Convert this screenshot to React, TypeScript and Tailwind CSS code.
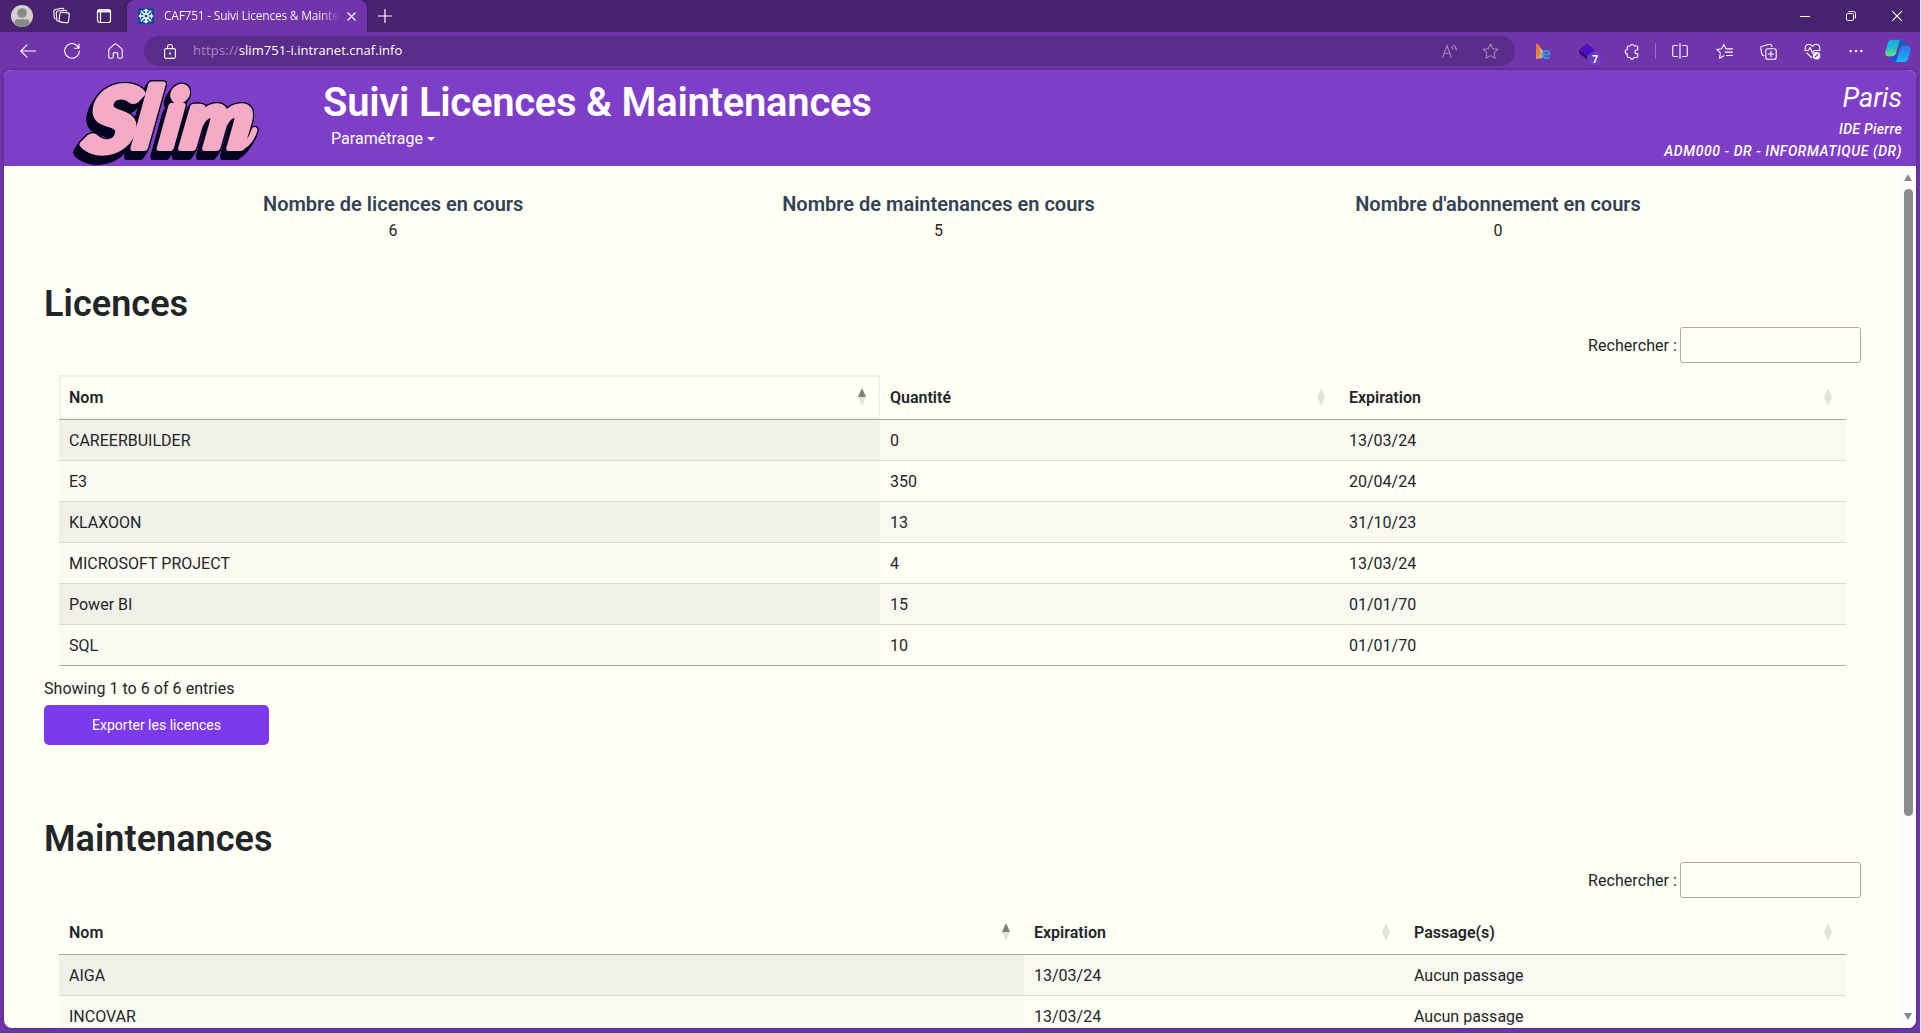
import type { ReactNode } from "react";

function Icon({ size = 16, children, className = "" }: { size?: number; children: ReactNode; className?: string }) {
  return (
    <svg
      width={size}
      height={size}
      viewBox="0 0 16 16"
      fill="none"
      stroke="currentColor"
      strokeWidth="1"
      strokeLinecap="round"
      strokeLinejoin="round"
      className={"shrink-0 " + className}
    >
      {children}
    </svg>
  );
}

function Slot({ children }: { children: ReactNode }) {
  return <div className="relative flex h-full w-11 shrink-0 items-center justify-center">{children}</div>;
}

function TabStrip() {
  return (
    <div className="flex h-8 items-stretch bg-[#47226e] text-white">
      <div className="flex w-[127px] items-center">
        <svg width="22" height="22" viewBox="0 0 22 22" className="ml-[11px]">
          <circle cx="11" cy="11" r="11" fill="#d2d0ce" />
          <circle cx="11" cy="8" r="4.8" fill="#8a8886" />
          <path d="M3.5 18.5v-1.2c0-1.8 1.2-3 3-3h9c1.800 0 3 1.200 3 3v1.200A11 11 0 0 1 11 22a11 11 0 0 1-7.500-3.500z" fill="#8a8886" />
        </svg>
        <svg width="18" height="18" viewBox="0 0 18 18" fill="none" stroke="white" strokeWidth="1.100" strokeLinejoin="round" className="ml-5">
          <rect x="6.500" y="5.500" width="9.500" height="10" rx="2" transform="rotate(7 11 10)" />
          <path d="M5.500 14.500c-1 0-1.600-.6-1.700-1.600L3.300 6c0-1.200.6-1.900 1.700-2l7-.8c1 0 1.700.4 2 1.300" />
          <path d="M2.700 12C1.800 11.800 1.300 11.200 1.200 10.200L.8 4.500c0-1.100.6-1.800 1.600-2l6.500-1.200c.9-.1 1.600.2 2 1" />
        </svg>
        <svg width="16" height="16" viewBox="0 0 16 16" fill="none" stroke="white" strokeWidth="1.200" className="ml-[25px]">
          <rect x="1.500" y="1.500" width="13" height="13" rx="2.200" />
          <path d="M1.500 3.300h13" strokeWidth="2.200" />
          <path d="M4.500 4v10" />
        </svg>
      </div>
      <div className="flex w-60 items-center rounded-t-lg bg-[#7034ab] pl-[11px] shadow-[0_0_3px_rgba(0,0,0,0.4)]">
        <svg width="16" height="16" viewBox="0 0 16 16" className="shrink-0">
          <rect width="16" height="16" fill="#0b4a9b" />
          <g stroke="white" strokeWidth="1.700" strokeLinecap="round">
            <path d="M8 1.500v13M1.500 8h13M3.400 3.400l9.200 9.200M12.600 3.400l-9.200 9.200" />
            <path d="M6 2.500h4M6 13.500h4M2.500 6v4M13.500 6v4" strokeWidth="1.300" />
          </g>
          <circle cx="8" cy="8" r="1.500" fill="#0b4a9b" />
        </svg>
        <span className="ml-[10px] w-[177px] whitespace-nowrap bg-gradient-to-r from-white from-88% to-transparent to-99% bg-clip-text font-['Open_Sans','Noto_Sans',sans-serif] text-[12px] tracking-[-0.24px] text-transparent">
          CAF751 - Suivi Licences &amp; Mainte
        </span>
        <svg width="9" height="9" viewBox="0 0 9 9" stroke="white" strokeWidth="1.100" className="ml-[6px] shrink-0">
          <path d="M.5.5l8 8M8.500.5l-8 8" />
        </svg>
      </div>
      <div className="flex flex-1 items-center">
        <svg width="14" height="14" viewBox="0 0 14 14" stroke="white" strokeWidth="1.200" className="ml-[11px]">
          <path d="M7 0v14M0 7h14" />
        </svg>
      </div>
      <div className="flex items-center">
        <svg width="10" height="10" viewBox="0 0 10 10" stroke="white" className="mr-9">
          <path d="M0 5.500h10" />
        </svg>
        <svg width="10" height="10" viewBox="0 0 10 10" fill="none" stroke="white" className="mr-9">
          <rect x=".5" y="2.500" width="7" height="7" rx="1.200" />
          <path d="M2.500.5h5a2 2 0 0 1 2 2v5" />
        </svg>
        <svg width="10" height="10" viewBox="0 0 10 10" stroke="white" strokeWidth="1.100" className="mr-[18px]">
          <path d="M0 0l10 10M10 0L0 10" />
        </svg>
      </div>
    </div>
  );
}

function Toolbar() {
  return (
    <div className="flex h-[38px] items-center bg-[#7034ab] text-white">
      <svg width="16" height="14" viewBox="0 0 16 14" fill="none" stroke="white" strokeWidth="1.100" strokeLinecap="round" strokeLinejoin="round" className="ml-5">
        <path d="M7 .8L.8 7 7 13.200M.8 7h14.700" />
      </svg>
      <svg width="16" height="16" viewBox="0 0 16 16" fill="none" stroke="white" strokeWidth="1.100" strokeLinecap="round" className="ml-7">
        <path d="M14.800 5.200A7.300 7.300 0 1 0 15.300 8M15 1v4.300h-4.300" />
      </svg>
      <svg width="15" height="16" viewBox="0 0 15 16" fill="none" stroke="white" strokeWidth="1.100" strokeLinejoin="round" className="ml-[28px]">
        <path d="M.8 6.900c0-.5.200-.9.600-1.200L6.600 1.200c.5-.5 1.300-.5 1.800 0l5.200 4.500c.4.300.6.700.6 1.200v7.200c0 .6-.5 1.100-1.100 1.100h-2.200c-.6 0-1.100-.5-1.100-1.100v-3.400c0-.6-.5-1.100-1.100-1.100H6.300c-.6 0-1.100.5-1.100 1.100v3.400c0 .6-.5 1.100-1.100 1.100H1.900c-.6 0-1.100-.5-1.100-1.100z" />
      </svg>
      <div className="ml-[21px] flex h-[30px] w-[1371px] items-center rounded-full bg-[#592c8a]">
        <svg width="12" height="15" viewBox="0 0 12 15" fill="none" stroke="white" strokeWidth="1.100" className="ml-5">
          <rect x=".6" y="4.600" width="10.800" height="9.800" rx="1.600" />
          <path d="M3.500 4.500V3a2.500 2.500 0 0 1 5 0v1.500" />
          <circle cx="6" cy="9.500" r="1" fill="white" stroke="none" />
        </svg>
        <span className="ml-[17px] flex-1 whitespace-nowrap font-['Open_Sans','Noto_Sans',sans-serif] text-[13px] tracking-[0.04px]">
          <span className="tracking-[0.18px] text-[#a48cc0]">https://</span>slim751-i.intranet.cnaf.info
        </span>
        <svg width="16" height="14" viewBox="0 0 16 14" fill="none" stroke="#a08bb5" strokeWidth="1.100" strokeLinecap="round" className="mr-6">
          <path d="M.8 13L5 1.500l4.200 11.500M2.200 9.300h5.600M9.500 2.500c1 .8 1.400 1.700 1.400 3M11.300.8c2 1.300 3 3 3 5.500" />
        </svg>
        <Icon size={17} className="mr-[16px] text-[#a08bb5]">
          <path d="M8 .9l2.100 4.500 4.900.6-3.600 3.400.9 4.900L8 11.900l-4.300 2.400.9-4.900L1 6l4.900-.6z" />
        </Icon>
      </div>
      <div className="ml-[6px] flex h-full items-center">
        <Slot>
          <svg width="16" height="16" viewBox="0 0 16 16">
            <path d="M1 0l4 3v3l3 2v3l-3 4-4 1z" fill="#f07820" />
            <path d="M4 4l4 3v8l-7 1 4-5z" fill="#b9a7a8" />
            <path d="M1 10l4 2-4 4z" fill="#f28a2e" />
            <path d="M8.500 11.500h6c0-2.200-1-3.700-3-3.700s-3.200 1.500-3.200 3.700 1.300 3.700 3.400 3.700c1.200 0 2-.3 2.700-1" fill="none" stroke="#3f8fd8" strokeWidth="1.900" />
          </svg>
        </Slot>
        <Slot>
          <svg width="18" height="18" viewBox="0 0 18 18">
            <path d="M9 1.500l8 6.500-8 6-8-6z" fill="#4b0fc0" />
            <path d="M1 8l8 6v3.500L1 11z" fill="#2c0a72" />
          </svg>
          <span className="absolute left-[24px] top-[21px] flex h-3 w-[12px] items-center justify-center rounded-sm bg-[#6a3bc4] font-['Open_Sans',sans-serif] text-[10px] font-bold">7</span>
        </Slot>
        <Slot>
          <Icon size={17}>
            <path d="M5.500 2.800h1.200a1.900 1.900 0 0 1 3.700 0h2.300c.7 0 1.200.5 1.200 1.200v2.300h-.7a1.900 1.900 0 0 0 0 3.800h.7v2.400c0 .7-.5 1.200-1.200 1.200h-2.400a1.900 1.900 0 0 1-3.700 0H5.200c-.7 0-1.200-.5-1.200-1.200v-2.300a1.900 1.900 0 0 1 0-3.800V4c0-.7.500-1.200 1.200-1.200z" />
          </Icon>
        </Slot>
        <div className="mx-0.5 h-4 w-px bg-[#9a70c6]" />
        <Slot>
          <svg width="16" height="16" viewBox="0 0 16 16" fill="none" stroke="white" strokeWidth="1.100" strokeLinecap="round">
            <path d="M5.500 2.500H2.300C1.400 2.500.7 3.200.7 4.100v7.800c0 .9.700 1.600 1.600 1.600h3.200M10.500 2.500h3.200c.9 0 1.600.7 1.600 1.600v7.800c0 .9-.7 1.600-1.600 1.600h-3.200M8 .5v15" />
          </svg>
        </Slot>
        <Slot>
          <Icon size={17}>
            <path d="M9.300 5.500L7.400 1.300 5.300 5.500.7 6.100l3.400 3.300-.8 4.900 4.100-2.300M10 5.500h5.500M8.700 8.600h6.800M9.800 11.700h5.700" />
          </Icon>
        </Slot>
        <Slot>
          <svg width="17" height="17" viewBox="0 0 17 17" fill="none" stroke="white" strokeWidth="1.100" strokeLinecap="round" strokeLinejoin="round">
            <rect x="5.800" y="5.800" width="10.400" height="10.400" rx="2" />
            <path d="M11 8.300v5.400M8.300 11h5.400M3.800 12.600c-1 .1-1.700-.4-1.900-1.400L.8 5.300c-.2-1 .4-1.800 1.300-2l7.400-2c1-.3 1.800.2 2.100 1.100l.3 1.200" />
          </svg>
        </Slot>
        <Slot>
          <svg width="17" height="17" viewBox="0 0 17 17" fill="none" stroke="white" strokeWidth="1.100" strokeLinecap="round" strokeLinejoin="round">
            <path d="M1.300 6.500C.6 4.300 1.900 1.300 4.700 1.300c1.700 0 2.800.9 3.800 2.200 1-1.300 2.100-2.200 3.800-2.200 2.800 0 4.100 3 3.400 5.200M.6 7.500h3.700l1.800-3 2.400 5.500 1.600-2.500h5.800M3 10l4.500 4.500" />
            <circle cx="12.500" cy="12.700" r="3.800" fill="white" stroke="none" />
            <path d="M11 13.900l2.800-2.500" stroke="#7034ab" strokeWidth="1.300" />
          </svg>
        </Slot>
        <Slot>
          <svg width="14" height="4" viewBox="0 0 14 4" fill="white">
            <circle cx="1.700" cy="2" r="1.200" />
            <circle cx="7" cy="2" r="1.200" />
            <circle cx="12.300" cy="2" r="1.200" />
          </svg>
        </Slot>
        <svg width="26" height="24" viewBox="0 0 26 24" className="ml-[7px]">
          <defs>
            <linearGradient id="copilotLeft" x1="0" y1="0" x2="0" y2="1">
              <stop offset="0" stopColor="#17a8e0" />
              <stop offset=".5" stopColor="#1fc0c8" />
              <stop offset="1" stopColor="#6be08a" />
            </linearGradient>
            <linearGradient id="copilotRight" x1="0" y1="0" x2="0" y2="1">
              <stop offset="0" stopColor="#2a74e8" />
              <stop offset="1" stopColor="#18b8f8" />
            </linearGradient>
          </defs>
          <path d="M13 .8h4c1.700 0 2.300 1 2.800 2.600L20.800 7H15c-2 0-3 1-3.500 3z" fill="#1560b8" />
          <path d="M12 23h-3c-2 0-2.500-1.500-3-3L5.200 16.500h3.500c2 0 3-1 3.500-3z" fill="#1b4fe0" />
          <path d="M6.500.8H17c-1.800 0-2.600 1.200-3.100 3l-2.700 10c-.6 2.200-1.900 3.400-3.900 3.400H3.400C1 17.200-.3 15.500.4 12.800L2.800 4C3.500 1.800 4.600.8 6.500.8z" fill="url(#copilotLeft)" />
          <path d="M19.300 23H9c1.800 0 2.600-1.200 3.100-3l2.600-9.800c.6-2.200 1.900-3.400 3.900-3.400h3.900c2.400 0 3.700 1.700 3 4.400L23 19.800c-.7 2.200-1.800 3.200-3.700 3.200z" fill="url(#copilotRight)" />
        </svg>
      </div>
    </div>
  );
}

const wordmark = [
  { ch: "S", x: 11, y: 74, scale: 1.1, size: 90 },
  { ch: "l", x: 61, y: 70, scale: 1, size: 85 },
  { ch: "i", x: 87, y: 70, scale: 1, size: 82 },
  { ch: "m", x: 109, y: 70, scale: 1.08, size: 80 },
];

function Logo() {
  return (
    <svg
      width="200"
      height="88"
      viewBox="0 0 200 88"
      className="ml-[67px] mt-2 shrink-0 [filter:drop-shadow(1px_0_0_#02031f)_drop-shadow(-1px_0_0_#02031f)_drop-shadow(0_1px_0_#02031f)_drop-shadow(0_-1px_0_#02031f)_drop-shadow(-1px_2px_0_#02031f)_drop-shadow(-2px_3px_0_#02031f)_drop-shadow(-2px_3px_0_#02031f)]"
    >
      <g fill="#f5aac6" stroke="#f5aac6" strokeWidth="6" strokeLinejoin="round" strokeLinecap="round">
        {wordmark.map((l) => (
          <text
            key={l.ch}
            transform={`translate(${l.x} ${l.y}) skewX(-9) scale(${l.scale} 1)`}
            fontSize={l.size}
            fontFamily="Lato, sans-serif"
            fontWeight="900"
            fontStyle="italic"
          >
            {l.ch}
          </text>
        ))}
        <path d="M171 69q9-5 12.500-17" fill="none" />
      </g>
    </svg>
  );
}

function AppHeader() {
  return (
    <header className="flex h-24 shrink-0 overflow-hidden bg-[#7e3ec8] text-white">
      <Logo />
      <div className="ml-[52px] pt-2">
        <h1 className="whitespace-nowrap text-[40px] font-semibold leading-[49px] tracking-[-0.27px]">Suivi Licences &amp; Maintenances</h1>
        <button className="ml-2 flex items-center text-base leading-6 tracking-[0.04px]">
          Paramétrage
          <span className="ml-1 border-x-[4.500px] border-t-[4.500px] border-x-transparent border-t-white" />
        </button>
      </div>
      <div className="ml-auto pr-3.5 pt-[9px] text-right text-sm italic">
        <p className="text-[27px] leading-[38px]">Paris</p>
        <p className="mt-px font-medium leading-[22px] tracking-[0.3px]">IDE Pierre</p>
        <p className="font-medium leading-[22px] tracking-[0.55px]">ADM000 - DR - INFORMATIQUE (DR)</p>
      </div>
    </header>
  );
}

function Stat({ label, value, className }: { label: string; value: number; className: string }) {
  return (
    <div className={"text-center " + className}>
      <h2 className="whitespace-nowrap text-xl font-semibold leading-6 text-[#334155]">{label}</h2>
      <p className="mt-[3px] leading-6">{value}</p>
    </div>
  );
}

function SortMark({ active = false }: { active?: boolean }) {
  return (
    <span className="flex flex-col items-center">
      <span className={"border-x-[4.500px] border-b-[9px] border-x-transparent " + (active ? "border-b-[#7e7f7c]" : "border-b-[#e3e3dc]")} />
      <span className="border-x-[4.500px] border-t-[9px] border-x-transparent border-t-[#e3e3dc]" />
    </span>
  );
}

type TableProps = {
  title: string;
  columns: string[];
  grid: string;
  rows: string[][];
  outlined?: boolean;
};

function DataSection({ title, columns, grid, rows, outlined = false }: TableProps) {
  return (
    <section>
      <h2 className="text-4xl font-semibold leading-[44px] tracking-[0.05px]">{title}</h2>
      <label className="mt-px flex h-9 items-center justify-end pr-[39px]">
        <span className="pt-px tracking-[0.06px]">Rechercher :</span>
        <input className="ml-[3px] h-9 w-[181px] rounded-[3px] border border-[#aaaaaa] bg-transparent" />
      </label>
      <div className="ml-[15px] mt-3 w-[1787px]">
        <div className={"grid h-[45px] border-b border-[#a9a9a3] " + grid}>
          {columns.map((c, i) => (
            <div
              key={c}
              className={
                "flex items-center justify-between pl-2.5 pr-[14px] font-semibold " +
                (outlined && i === 0 ? "shadow-[inset_0_0_0_2px_#f1f1ea]" : "")
              }
            >
              <span className="pt-px">{c}</span>
              <SortMark active={i === 0} />
            </div>
          ))}
        </div>
        {rows.map((row, r) => (
          <div
            key={row[0]}
            className={
              "grid h-[41px] border-b leading-[41px] " +
              grid +
              (r % 2 === 0 ? " bg-[#f9f9f2]" : "") +
              (r === rows.length - 1 ? " border-[#a9a9a3]" : " border-[#d9d9d2]")
            }
          >
            {row.map((cell, i) => (
              <div key={i} className={"h-10 pl-2.5 " + (i === 0 ? (r % 2 === 0 ? "bg-[#f1f1ea]" : "bg-[#fbfbf3]") : "")}>
                {cell}
              </div>
            ))}
          </div>
        ))}
      </div>
    </section>
  );
}

const licences = [
  ["CAREERBUILDER", "0", "13/03/24"],
  ["E3", "350", "20/04/24"],
  ["KLAXOON", "13", "31/10/23"],
  ["MICROSOFT PROJECT", "4", "13/03/24"],
  ["Power BI", "15", "01/01/70"],
  ["SQL", "10", "01/01/70"],
];

const maintenances = [
  ["AIGA", "13/03/24", "Aucun passage"],
  ["INCOVAR", "13/03/24", "Aucun passage"],
];

function Scrollbar() {
  return (
    <div className="flex w-4 shrink-0 flex-col items-center bg-[#fcfcfc] py-2">
      <span className="border-x-[4.500px] border-b-[7px] border-x-transparent border-b-[#8b8b8b]" />
      <span className="mt-2 h-[627px] w-[9px] rounded-full bg-[#8b8b8b]" />
      <span className="mt-auto border-x-[4.500px] border-t-[7px] border-x-transparent border-t-[#8b8b8b]" />
    </div>
  );
}

export default function App() {
  return (
    <div className="flex h-[1033px] w-[1921px] flex-col overflow-hidden border-r border-[#e8e4ee] bg-[#7034ab] font-['Roboto',sans-serif] text-base text-[#212529]">
      <TabStrip />
      <Toolbar />
      <div className="mx-1 flex h-[958px] shrink-0 flex-col overflow-hidden rounded-lg bg-[#fffff6] shadow-[0_0_3px_rgba(0,0,0,0.35)]">
        <AppHeader />
        <div className="flex min-h-0 flex-1">
          <main className="min-w-0 flex-1 overflow-hidden pl-10">
            <div className="flex h-[116px] pt-[26px]">
              <Stat className="ml-[219px] w-[260px]" label="Nombre de licences en cours" value={6} />
              <Stat className="ml-[259px] w-[313px]" label="Nombre de maintenances en cours" value={5} />
              <Stat className="ml-[259px] w-[288px]" label="Nombre d'abonnement en cours" value={0} />
            </div>
            <DataSection
              title="Licences"
              columns={["Nom", "Quantité", "Expiration"]}
              grid="grid-cols-[821px_459px_507px]"
              rows={licences}
              outlined
            />
            <p className="mt-[11px] leading-6 tracking-[0.04px]">Showing 1 to 6 of 6 entries</p>
            <button className="mb-[72px] mt-1 block h-10 w-[225px] rounded-[5px] bg-[#7c3aed] text-sm text-white">Exporter les licences</button>
            <DataSection
              title="Maintenances"
              columns={["Nom", "Expiration", "Passage(s)"]}
              grid="grid-cols-[965px_380px_442px]"
              rows={maintenances}
            />
          </main>
          <Scrollbar />
        </div>
      </div>
      <div className="mt-auto h-px w-full bg-[#4d4a5c]" />
    </div>
  );
}
